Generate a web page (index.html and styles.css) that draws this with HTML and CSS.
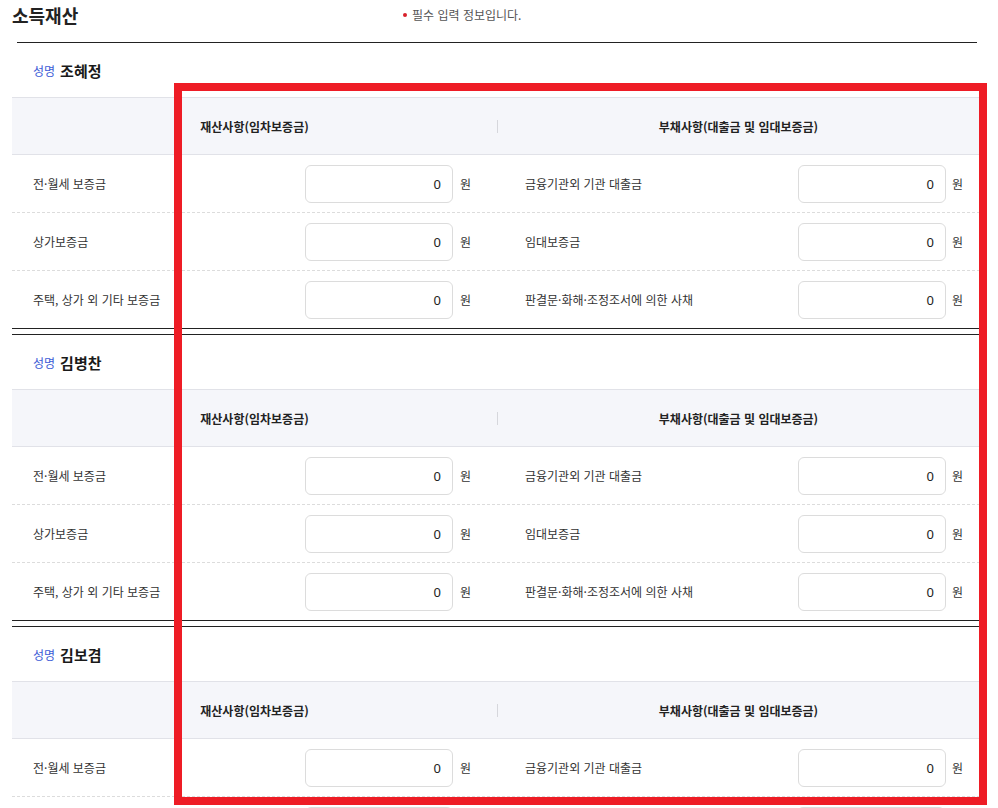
FILE: index.html
```html
<!DOCTYPE html>
<html lang="ko">
<head>
<meta charset="utf-8">
<title>소득재산</title>
<link rel="stylesheet" href="styles.css">
</head>
<body>
<div class="page">
  <div class="title-row">
    <h2 class="title">소득재산</h2>
    <p class="note"><span class="req-dot"></span>필수 입력 정보입니다.</p>
  </div>
  <div class="title-line"></div>

  <section class="person first">
    <div class="name-row"><span class="name-label">성명</span><span class="name">조혜정</span></div>
    <div class="head-row">
      <div class="head-cell">재산사항(임차보증금)</div>
      <div class="head-cell sep">부채사항(대출금 및 임대보증금)</div>
    </div>
    <div class="row">
      <div class="label">전·월세 보증금</div>
      <div class="asset"><input class="amount" type="text" value="0"><span class="unit">원</span></div>
      <div class="debt"><span class="label-r">금융기관외 기관 대출금</span><input class="amount" type="text" value="0"><span class="unit">원</span></div>
    </div>
    <div class="row">
      <div class="label">상가보증금</div>
      <div class="asset"><input class="amount" type="text" value="0"><span class="unit">원</span></div>
      <div class="debt"><span class="label-r">임대보증금</span><input class="amount" type="text" value="0"><span class="unit">원</span></div>
    </div>
    <div class="row last">
      <div class="label">주택, 상가 외 기타 보증금</div>
      <div class="asset"><input class="amount" type="text" value="0"><span class="unit">원</span></div>
      <div class="debt"><span class="label-r">판결문·화해·조정조서에 의한 사채</span><input class="amount" type="text" value="0"><span class="unit">원</span></div>
    </div>
  </section>

  <section class="person">
    <div class="name-row"><span class="name-label">성명</span><span class="name">김병찬</span></div>
    <div class="head-row">
      <div class="head-cell">재산사항(임차보증금)</div>
      <div class="head-cell sep">부채사항(대출금 및 임대보증금)</div>
    </div>
    <div class="row">
      <div class="label">전·월세 보증금</div>
      <div class="asset"><input class="amount" type="text" value="0"><span class="unit">원</span></div>
      <div class="debt"><span class="label-r">금융기관외 기관 대출금</span><input class="amount" type="text" value="0"><span class="unit">원</span></div>
    </div>
    <div class="row">
      <div class="label">상가보증금</div>
      <div class="asset"><input class="amount" type="text" value="0"><span class="unit">원</span></div>
      <div class="debt"><span class="label-r">임대보증금</span><input class="amount" type="text" value="0"><span class="unit">원</span></div>
    </div>
    <div class="row last">
      <div class="label">주택, 상가 외 기타 보증금</div>
      <div class="asset"><input class="amount" type="text" value="0"><span class="unit">원</span></div>
      <div class="debt"><span class="label-r">판결문·화해·조정조서에 의한 사채</span><input class="amount" type="text" value="0"><span class="unit">원</span></div>
    </div>
  </section>

  <section class="person">
    <div class="name-row"><span class="name-label">성명</span><span class="name">김보겸</span></div>
    <div class="head-row">
      <div class="head-cell">재산사항(임차보증금)</div>
      <div class="head-cell sep">부채사항(대출금 및 임대보증금)</div>
    </div>
    <div class="row">
      <div class="label">전·월세 보증금</div>
      <div class="asset"><input class="amount" type="text" value="0"><span class="unit">원</span></div>
      <div class="debt"><span class="label-r">금융기관외 기관 대출금</span><input class="amount" type="text" value="0"><span class="unit">원</span></div>
    </div>
    <div class="row peek">
      <div class="asset"><input class="amount" type="text" value=""></div>
      <div class="debt"><span class="label-r"></span><input class="amount" type="text" value=""></div>
    </div>
  </section>
</div>
<div class="highlight"></div>
</body>
</html>
```

FILE: styles.css
```css
* { box-sizing: border-box; }
html, body { margin: 0; padding: 0; background: #fff; }
body {
  font-family: "Noto Sans CJK KR", "Noto Sans", sans-serif;
  color: #333;
  overflow: hidden;
  height: 808px;
}
.page {
  padding: 0 18px 0 12px;
  width: 998px;
}
.title-row {
  display: grid;
  grid-template-columns: 391px 1fr;
  align-items: center;
  height: 30px;
}
.title {
  margin: 0;
  font-size: 18px;
  font-weight: 700;
  color: #222;
  line-height: 30px;
}
.note {
  margin: 0;
  font-size: 12px;
  color: #555;
  display: flex;
  align-items: center;
  line-height: 28px;
}
.req-dot {
  width: 4px;
  height: 4px;
  border-radius: 50%;
  background: #d8202b;
  margin-right: 5px;
}
.title-line {
  height: 1px;
  background: #222;
  margin: 12px 3px 0 5px;
}
.person {
  border-top: 1px solid #222;
  border-bottom: 1px solid #222;
  margin-top: 5px;
}
.person.first {
  border-top: 0;
  margin-top: 0;
}
.name-row {
  height: 54px;
  display: flex;
  align-items: center;
  padding-left: 21px;
  gap: 5px;
}
.name-label {
  font-size: 12px;
  color: #3b5bd6;
}
.name {
  font-size: 15px;
  font-weight: 700;
  color: #1a1a1a;
}
.head-row {
  display: grid;
  grid-template-columns: 485px 1fr;
  height: 58px;
  background: #f5f6fa;
  border-top: 1px solid #e1e2e8;
  border-bottom: 1px solid #e1e2e8;
}
.head-cell {
  display: flex;
  align-items: center;
  justify-content: center;
  font-size: 12px;
  font-weight: 700;
  color: #222;
  position: relative;
}
.head-cell.sep::before {
  content: "";
  position: absolute;
  left: 0;
  top: 22px;
  width: 1px;
  height: 13px;
  background: #d6d7dc;
}
.row {
  display: grid;
  grid-template-columns: 168px 317px 1fr;
  height: 58px;
  border-bottom: 1px dashed #dcdcdc;
  font-size: 12px;
}
.row.last {
  height: 57px;
  border-bottom: 0;
}
.row.peek {
  grid-template-columns: 485px 1fr;
  padding-left: 168px;
  grid-template-columns: 317px 1fr;
  border-bottom: 0;
}
.row.peek .asset { padding-right: 44px; }
.row.peek .debt { padding-right: 35px; }
.label {
  display: flex;
  align-items: center;
  padding-left: 21px;
  color: #333;
}
.asset {
  display: flex;
  align-items: center;
  justify-content: flex-end;
  padding-right: 26px;
  gap: 7px;
}
.debt {
  display: flex;
  align-items: center;
  padding-left: 28px;
  padding-right: 17px;
  gap: 6px;
}
.label-r {
  flex: 1;
  color: #333;
}
.amount {
  width: 148px;
  height: 38px;
  border: 1px solid #dcdcdc;
  border-radius: 6px;
  background: #fff;
  padding: 0 11px;
  text-align: right;
  font-family: "Noto Sans", "Noto Sans CJK KR", sans-serif;
  font-size: 13px;
  color: #222;
  outline: none;
}
.unit {
  color: #333;
  font-size: 12px;
}
.highlight {
  position: absolute;
  left: 174px;
  top: 83px;
  width: 813px;
  height: 722px;
  border: 8px solid #ee1c25;
  pointer-events: none;
}
```
